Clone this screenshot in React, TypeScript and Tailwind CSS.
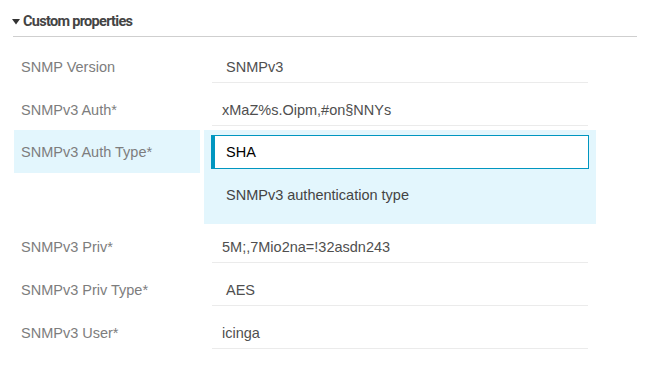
const rowsBefore = [
  { label: "SNMP Version", value: "SNMPv3", select: true },
  { label: "SNMPv3 Auth*", value: "xMaZ%s.Oipm,#on§NNYs", select: false },
];

const rowsAfter = [
  { label: "SNMPv3 Priv*", value: "5M;,7Mio2na=!32asdn243", select: false },
  { label: "SNMPv3 Priv Type*", value: "AES", select: true },
  { label: "SNMPv3 User*", value: "icinga", select: false },
];

function Row({ label, value, select }: { label: string; value: string; select: boolean }) {
  return (
    <div className="flex">
      <div className="w-[186px] h-[38px] pl-[7px] pt-[12px] leading-[20px] text-[#7d7d7d]">{label}</div>
      <div className="ml-[4px] w-[392px] px-[8px]">
        <div
          className={
            "h-[38px] border-b border-[#ebebeb] pt-[12px] leading-[20px] text-[#4f4f4f] " +
            (select ? "pl-[14px]" : "pl-[10px]")
          }
        >
          {value}
        </div>
      </div>
    </div>
  );
}

export default function App() {
  return (
    <div className="w-[650px] h-[370px] bg-white font-['Liberation_Sans',Arial,sans-serif] text-[14.5px]">
      <div className="mx-[13px] pt-[13px]">
        <div className="flex items-center h-[18px]">
          <svg width="8" height="6" viewBox="0 0 8 6" className="mr-[3px] -ml-[1px]">
            <path d="M0 0 H8 L4 5.5 Z" fill="#333" />
          </svg>
          <span className="font-['Roboto',sans-serif] font-bold text-[14.5px] tracking-[-0.7px] text-[#444]">
            Custom properties
          </span>
        </div>
        <div className="mt-[5px] border-t border-[#cfcfcf]" />
      </div>

      <div className="pl-[14px] pt-[8px]">
        <div className="mb-[5px]">
          <Row {...rowsBefore[0]} />
        </div>
        <div className="mb-[4px]">
          <Row {...rowsBefore[1]} />
        </div>

        <div className="flex">
          <div className="w-[186px] h-[43px] bg-[#e3f6fd] pl-[7px] pt-[12px] leading-[20px] text-[#7d7d7d]">
            SNMPv3 Auth Type*
          </div>
          <div className="ml-[4px] w-[392px] h-[94px] bg-[#e3f6fd] px-[7px] pt-[5px]">
            <div className="h-[34px] bg-white border border-l-4 border-[#0096c0] pl-[11px] leading-[32px] text-black">
              SHA
            </div>
            <div className="pl-[15px] pt-[16px] leading-[20px] text-[#444]">SNMPv3 authentication type</div>
          </div>
        </div>

        <div className="pt-[1px]">
          {rowsAfter.map((r) => (
            <div key={r.label} className="mb-[5px]">
              <Row {...r} />
            </div>
          ))}
        </div>
      </div>
    </div>
  );
}
